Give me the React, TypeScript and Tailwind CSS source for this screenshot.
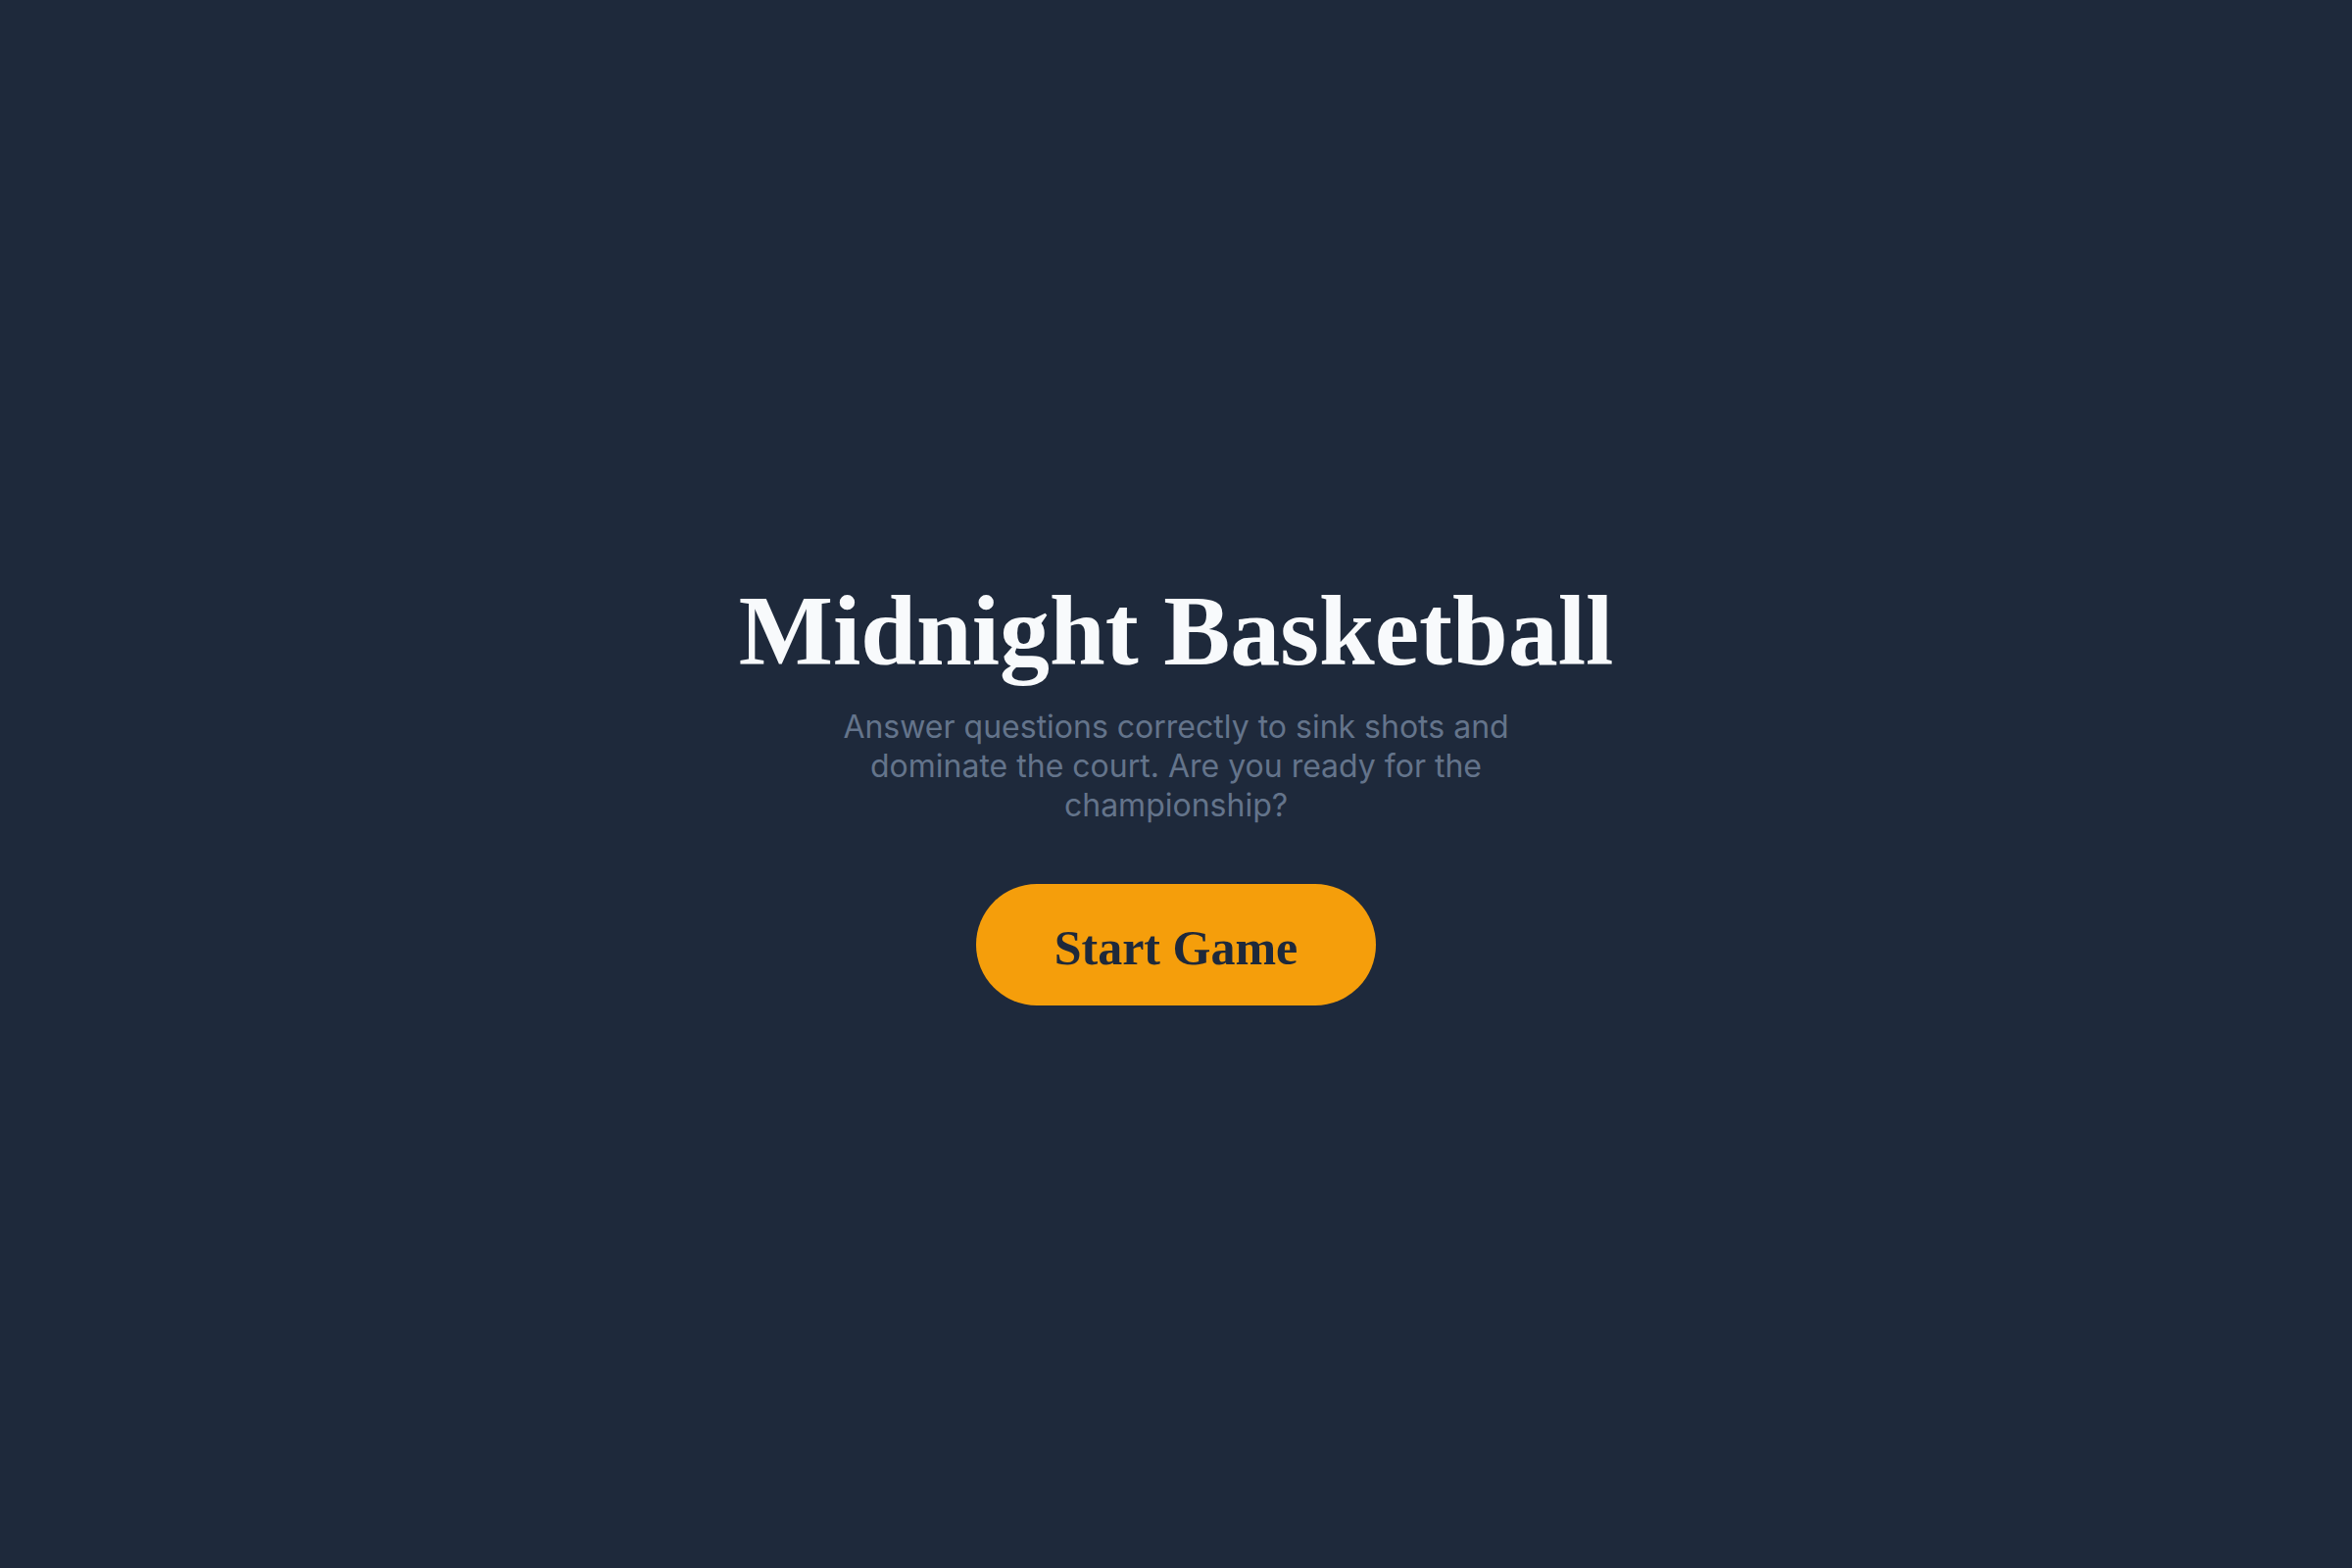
export default function App() {
  return (
    <div className="flex min-h-screen flex-col items-center justify-center bg-[#1e293b] pt-[18px] text-center">
      <h1 className="font-['Liberation_Serif',serif] text-[102px] font-bold leading-none text-[#f8fafc]">
        Midnight Basketball
      </h1>
      <p className="mt-[27px] max-w-[700px] font-['Inter',sans-serif] text-[32px] leading-[40px] text-[#64748b]">
        Answer questions correctly to sink shots and dominate the court. Are you ready for the championship?
      </p>
      <button
        type="button"
        className="mt-[60px] rounded-full bg-[#f59e0b] px-[80px] pt-[40px] pb-[34px] font-['Liberation_Serif',serif] text-[50px] font-bold leading-none text-[#1e293b]"
      >
        Start Game
      </button>
    </div>
  );
}
